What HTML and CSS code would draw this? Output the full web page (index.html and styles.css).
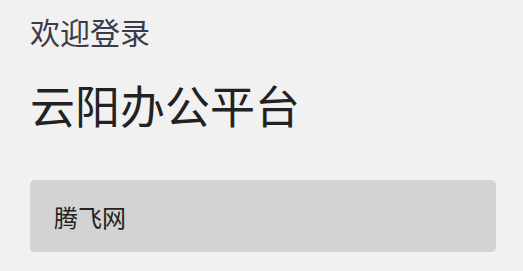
FILE: index.html
```html
<!DOCTYPE html>
<html lang="zh">
<head>
<meta charset="utf-8">
<link rel="stylesheet" href="styles.css">
</head>
<body>
<div class="page">
  <div class="welcome">欢迎登录</div>
  <div class="title">云阳办公平台</div>
  <div class="field">腾飞网</div>
</div>
</body>
</html>
```
FILE: styles.css
```css
html, body {
  margin: 0;
  padding: 0;
  background: #f1f1f1;
}
.page {
  font-family: "Noto Sans CJK SC", "Noto Sans", sans-serif;
  padding: 10px 27px 0 30px;
  display: flex;
  flex-direction: column;
}
.welcome {
  font-size: 30px;
  line-height: 42px;
  color: #3b3b4a;
}
.title {
  margin-top: 25px;
  font-size: 45px;
  line-height: 56px;
  color: #222;
}
.field {
  margin-top: 47px;
  height: 72px;
  box-sizing: border-box;
  background: #d3d3d3;
  border-radius: 5px;
  padding-left: 24px;
  display: flex;
  align-items: center;
  font-size: 24px;
  color: #222;
  box-shadow: 0 1px 1px rgba(0,0,0,0.06);
}
```
